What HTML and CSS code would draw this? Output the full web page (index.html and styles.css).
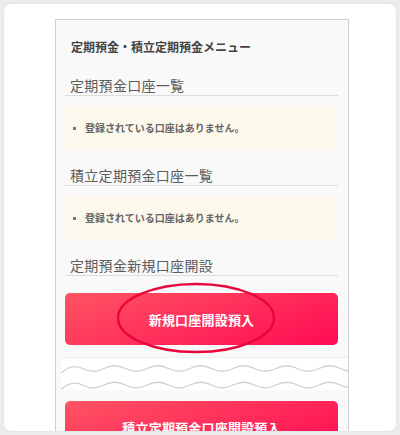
FILE: index.html
```html
<!DOCTYPE html>
<html lang="ja">
<head>
<meta charset="UTF-8">
<title>定期預金・積立定期預金メニュー</title>
<link rel="stylesheet" href="styles.css">
</head>
<body>
<div class="frame">
  <div class="panel">
    <h1 class="menu-title">定期預金・積立定期預金メニュー</h1>

    <h2 class="section-title">定期預金口座一覧</h2>
    <div class="notice">
      <ul><li>登録されている口座はありません。</li></ul>
    </div>

    <h2 class="section-title">積立定期預金口座一覧</h2>
    <div class="notice">
      <ul><li>登録されている口座はありません。</li></ul>
    </div>

    <h2 class="section-title">定期預金新規口座開設</h2>
    <div class="btn-wrap">
      <a class="btn" href="#">新規口座開設預入</a>
      <!-- 注目用の赤丸 -->
      <svg class="mark" width="160" height="74" viewBox="0 0 160 74">
        <ellipse cx="80" cy="37" rx="78" ry="34" fill="none" stroke="#e8063c" stroke-width="2.5"/>
      </svg>
    </div>

    <div class="cut">
      <svg width="287" height="34" viewBox="0 0 287 34">
        <path d="M0 10 Q10.75 0 21.5 5.5 T43 5.5 T64.5 5.5 T86 5.5 T107.5 5.5 T129 5.5 T150.5 5.5 T172 5.5 T193.5 5.5 T215 5.5 T236.5 5.5 T258 5.5 T279.5 5.5 T301 5.5" fill="none" stroke="#d2d2d2" stroke-width="1.3" transform="translate(0 5)"/>
        <path d="M0 10 Q10.75 0 21.5 5.5 T43 5.5 T64.5 5.5 T86 5.5 T107.5 5.5 T129 5.5 T150.5 5.5 T172 5.5 T193.5 5.5 T215 5.5 T236.5 5.5 T258 5.5 T279.5 5.5 T301 5.5" fill="none" stroke="#d2d2d2" stroke-width="1.3" transform="translate(0 21.5)"/>
      </svg>
    </div>

    <div class="btn-wrap">
      <a class="btn" href="#">積立定期預金口座開設預入</a>
    </div>
  </div>
</div>
</body>
</html>
```

FILE: styles.css
```css
:root{
  --text:#555;
  --line:#dcdcdc;
  --cream:#fdf8ec;
  --panel:#f9f9f9;
}
*{box-sizing:border-box;margin:0;padding:0;}
body{background:#ececec;font-family:"Noto Sans CJK JP","Noto Sans",sans-serif;color:var(--text);height:435px;overflow:hidden;padding:4px;}
.frame{background:#fff;height:427px;border-radius:7px;box-shadow:0 0 2px rgba(0,0,0,.08);overflow:hidden;padding:15px 47px 0 51px;}
.panel{background:var(--panel);border:1px solid #cfcfcf;border-bottom:none;height:420px;padding:19px 10px 0 9px;}
.menu-title{font-size:12px;line-height:16px;font-weight:700;color:#444;padding-left:6px;}
.section-title{font-size:14px;letter-spacing:.3px;line-height:16px;padding-bottom:2px;font-weight:400;color:#5c5c5c;padding-left:5px;border-bottom:1px solid var(--line);margin-top:22px;}
.notice{background:var(--cream);margin-top:10px;height:44px;display:flex;align-items:center;padding-left:8px;}
.notice + .section-title{margin-top:17px;}
.notice ul{list-style:none;}
.notice li{font-size:10px;line-height:14px;font-weight:700;color:#666;display:flex;align-items:center;gap:9px;}
.notice li::before{content:"";width:3px;height:3px;background:#777;}
.btn-wrap{position:relative;margin-top:17px;}
.btn{display:flex;align-items:center;justify-content:center;height:52px;border-radius:5px;background:linear-gradient(160deg,#ff5463,#ff0b53);color:#fff;text-decoration:none;font-size:13px;font-weight:700;letter-spacing:.2px;}
.mark{position:absolute;left:51px;top:-12px;}
.cut{background:#fff;margin:12px -10px 0 -4px;height:33px;border-top:1px solid #eee;}
.cut svg{display:block;}
.cut + .btn-wrap{margin-top:11px;}
```
